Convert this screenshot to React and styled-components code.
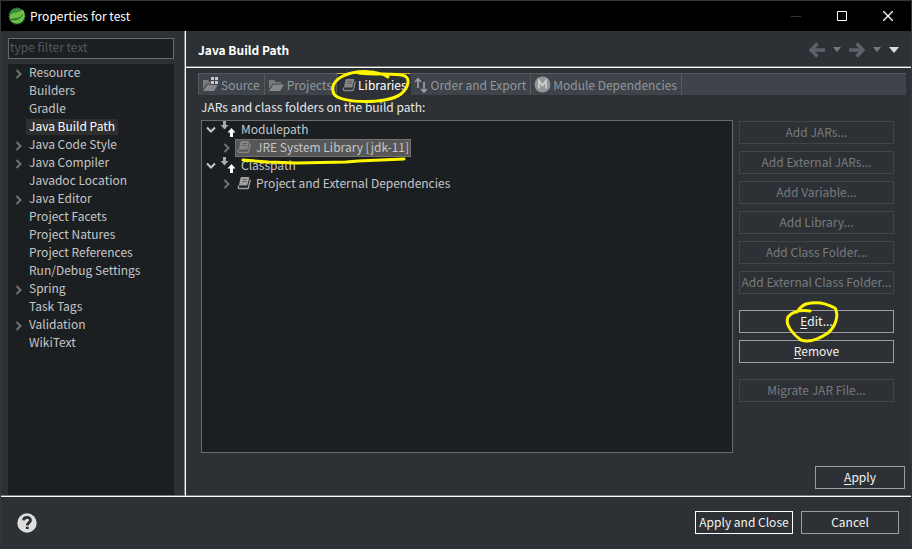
import React from "react";
import styled, { createGlobalStyle, css } from "styled-components";

const GlobalStyle = createGlobalStyle`
  * { box-sizing: border-box; }
  body { margin: 0; background: #2d3135; }
  body, button, input {
    font-family: "Noto Sans CJK KR", "Noto Sans", sans-serif;
    font-size: 12px;
    line-height: 18px;
  }
  ul { list-style: none; margin: 0; padding: 0; }
`;

const Window = styled.div`
  display: flex;
  flex-direction: column;
  min-height: 100vh;
  border: 1px solid #33373a;
  background: #2d3135;
  color: #f2f2f2;
`;

const TitleBar = styled.header`
  display: flex;
  align-items: center;
  height: 30px;
  padding-left: 7px;
  background: #000;
`;

const WindowTitle = styled.h1`
  flex: 1;
  margin: 0 0 0 4px;
  font-size: 12px;
  font-weight: 400;
  color: #fff;
`;

const CaptionButton = styled.button`
  display: flex;
  align-items: center;
  justify-content: center;
  width: 46px;
  height: 30px;
  padding: 0;
  border: 0;
  background: transparent;
  color: ${(p) => (p.disabled ? "#333" : "#fff")};
`;

const Body = styled.div`
  flex: 1;
  display: flex;
  border-bottom: 1px solid #fff;
  box-shadow: inset 0 -1px #77797b;
`;

const Sidebar = styled.aside`
  display: flex;
  flex-direction: column;
  gap: 5px;
  width: 185px;
  padding: 7px 11px 1px 7px;
  border-right: 1px solid #fff;
  box-shadow: inset -1px 0 #77797b;
`;

const FilterInput = styled.input`
  height: 21px;
  padding: 0 1px 4px;
  border: 1px solid #6b6b6b;
  border-radius: 0;
  background: #1c1f21;
  color: #ddd;
  outline: none;
  &::placeholder { color: #55585a; opacity: 1; }
`;

const PageTree = styled.ul`
  flex: 1;
  background: #1c1f21;
`;

const PageItem = styled.li`
  display: flex;
  align-items: center;
  height: 18px;
  padding-left: 7px;
`;

const ChevronSlot = styled.span`
  display: flex;
  align-items: center;
  width: ${(p) => (p.$wide ? "12px" : "11px")};
  padding-top: ${(p) => (p.$wide ? "0" : "2px")};
`;

const PageLink = styled.a`
  height: 16px;
  padding: 0 3px;
  line-height: 14px;
  text-decoration: none;
  white-space: nowrap;
  color: ${(p) => (p.$selected ? "#fff" : "#c4c6c8")};
  background: ${(p) => (p.$selected ? "#2f2f2f" : "transparent")};
`;

const Content = styled.main`
  flex: 1;
  min-width: 0;
  display: flex;
  flex-direction: column;
`;

const PageHeader = styled.div`
  display: flex;
  align-items: center;
  justify-content: space-between;
  height: 37px;
  padding: 1px 12px 0 12px;
  border-bottom: 1px solid #fff;
  box-shadow: inset 0 -1px #77797b;
`;

const PageTitle = styled.h2`
  margin: 0;
  font-size: 12px;
  font-weight: 700;
  color: #fff;
`;

const Navigation = styled.nav`
  display: flex;
  align-items: center;
  gap: 8px;
`;

const NavButton = styled.button`
  display: flex;
  padding: 0;
  border: 0;
  background: transparent;
`;

const TabBar = styled.div`
  display: flex;
  height: 22px;
  margin: 5px 5px 0 12px;
  border: 1px solid #555a5e;
  border-width: 1px 0 0 1px;
  background: #3e444a;
`;

const Tab = styled.button`
  position: relative;
  display: flex;
  align-items: center;
  gap: 2px;
  height: 22px;
  margin-top: -1px;
  padding: 0 4px 0 3px;
  border: solid #555a5e;
  border-width: 1px 1px 0 0;
  background: transparent;
  color: #92989d;
  white-space: nowrap;
  ${(p) => p.$active && css`
    padding: 0 3px 0 5px;
    border-color: #e2ac25 transparent transparent;
    background: #2d3135;
    color: #fff;
  `}
`;

const TreeCaption = styled.div`
  margin: 3px 0 0 15px;
  line-height: 18px;
  color: #e8eaec;
`;

const Workspace = styled.div`
  flex: 1;
  display: flex;
  gap: 6px;
  padding: 4px 17px 13px 15px;
`;

const PathTree = styled.ul`
  flex: 1;
  min-width: 0;
  border: 1px solid #6b6b6b;
  background: #1c1f21;
`;

const PathRow = styled.div`
  display: flex;
  align-items: center;
  height: 18px;
  padding-left: ${(p) => (p.$child ? "21px" : "4px")};
`;

const PathLabel = styled.span`
  position: relative;
  display: flex;
  align-items: center;
  gap: 5px;
  height: 18px;
  padding: 0 1px 3px;
  line-height: 14px;
  white-space: nowrap;
  border: 1px solid ${(p) => (p.$selected ? "#727272" : "transparent")};
  background: ${(p) => (p.$selected ? "#575757" : "transparent")};
  color: #c4c6c8;
`;

const Actions = styled.div`
  display: flex;
  flex-direction: column;
  gap: 16px;
  width: 155px;
  padding-top: 1px;
`;

const ActionGroup = styled.div`
  display: flex;
  flex-direction: column;
  gap: 7px;
`;

const PushButton = styled.button`
  position: relative;
  width: ${(p) => p.$width || "100%"};
  height: 23px;
  padding: 0 0 2px;
  border: 1px solid ${(p) => (p.$primary ? "#fff" : "#9a9c9e")};
  background: transparent;
  color: #f2f2f2;
  line-height: 18px;
  white-space: nowrap;
  &:disabled { border-color: #414548; color: #787b7d; }
  u { text-underline-offset: 2px; }
`;

const ApplyRow = styled.div`
  display: flex;
  justify-content: flex-end;
  padding: 0 6px 7px;
`;

const Footer = styled.footer`
  display: flex;
  align-items: center;
  gap: 8px;
  height: 51px;
  padding: 0 12px 0 16px;
`;

const HelpButton = styled.button`
  display: flex;
  margin-right: auto;
  padding: 0;
  border: 0;
  background: transparent;
`;

const Marker = styled.svg`
  position: absolute;
  z-index: 2;
  overflow: visible;
  pointer-events: none;
  fill: none;
  stroke: #fff700;
  stroke-width: 3;
  stroke-linecap: round;
  stroke-linejoin: round;
`;
const TabMarker = styled(Marker)`left: -6px; top: -4px;`;
const RowMarker = styled(Marker)`left: 6px; top: 19px;`;
const EditMarker = styled(Marker)`left: 45px; top: -11px;`;

const SpringLogo = () => (
  <svg width="18" height="18" viewBox="0 0 18 18" aria-hidden="true">
    <circle cx="9" cy="9" r="7.7" fill="#398c42" stroke="#398c42" strokeWidth="1.4" strokeDasharray="1.5 1" />
    <path d="M2 10C2 4.500 8 8 15 2.800C18 8 16.500 14 12 15.800C7 17.500 3 15 2.200 12.800C6 13.500 11 12.500 14 8.500C10 11.500 6 10.500 2 12Z" fill="#70c043" />
    <path d="M3 12.600C8.500 13.500 12.500 12 14.500 7.500" fill="none" stroke="#246b36" />
  </svg>
);

const Chevron = ({ open }) =>
  open ? (
    <svg width="10" height="8" viewBox="0 0 10 8" fill="none" stroke="#c4c6c8" strokeWidth="2" aria-hidden="true"><path d="M1 1.500L5 5.500L9 1.500" /></svg>
  ) : (
    <svg width="8" height="10" viewBox="0 0 8 10" fill="none" stroke="#6f7274" strokeWidth="2" aria-hidden="true"><path d="M1.500 1L5.500 5L1.500 9" /></svg>
  );

const PathIcon = () => (
  <svg width="16" height="16" viewBox="0 0 16 16" aria-hidden="true">
    <path d="M3 0H6V4H8.500L4.500 8.500L.5 4H3Z" fill="#aaa" />
    <path d="M10 16H13V11.500H15.500L11.500 7L7.500 11.500H10Z" fill="#fff" />
  </svg>
);

const BookIcon = ({ color = "#858585" }) => (
  <svg width="14" height="14" viewBox="0 0 14 14" aria-hidden="true">
    <path d="M4.500 1H11.500Q12.500 1 12.200 2L10.200 9.500H2.500Q1.800 9.500 2.100 8.500L3.500 2Q3.700 1 4.500 1Z" fill={color} />
    <path d="M1.600 9.500Q.6 12.500 2.500 12.500H10.500Q11.300 12.500 11.500 11.500L13.300 3.500" fill="none" stroke={color} strokeWidth="1.300" />
    <path d="M5.500 3.500H10M5 5.500H9.500" stroke="#55585a" strokeWidth=".8" />
  </svg>
);

const FolderIcon = ({ source }) => (
  <svg width="17" height="16" viewBox="0 0 17 16" aria-hidden="true">
    <path d="M1 12V3H6L7.500 5H13V6.500H5L1 12Z" fill="#777b7d" />
    <path d="M5.500 7.500H16L12 14H1Z" fill="#858889" />
    {source && <path d="M8.500 0H17V8H8.500Z" fill="#3e444a" />}
    {source && <path d="M9 0h3v3H9zM13 0h3v3h-3zM9 4h3v3H9zM13 4h3v3h-3z" fill="#c5c7c8" />}
  </svg>
);

const OrderIcon = () => (
  <svg width="15" height="16" viewBox="0 0 15 16" fill="none" stroke="#9a9d9f" strokeWidth="1.700" aria-hidden="true">
    <path d="M4 11V2M1 5L4 1.700L7 5" />
    <path d="M10 5V15M7 12L10 15L13 12" />
  </svg>
);

const ModuleIcon = () => (
  <svg width="17" height="17" viewBox="0 0 17 17" aria-hidden="true">
    <circle cx="8.500" cy="8.500" r="8" fill="#929595" />
    <path d="M5 12.500V4.500L8.500 9.500L12 4.500V12.500" fill="none" stroke="#d2d3d3" strokeWidth="1.600" />
  </svg>
);

const Arrow = ({ forward }) => (
  <svg width="16" height="16" viewBox="0 0 16 16" fill="none" stroke="#5c6068" strokeWidth="3.500" aria-hidden="true">
    <path d={forward ? "M0 8H13M7.500 1.500L14 8L7.500 14.500" : "M16 8H3M8.500 1.500L2 8L8.500 14.500"} />
  </svg>
);

const Caret = ({ large }) =>
  large ? (
    <svg width="10" height="6" viewBox="0 0 10 6" aria-hidden="true"><path d="M0 0H10L5 6Z" fill="#dedede" /></svg>
  ) : (
    <svg width="8" height="5" viewBox="0 0 8 5" aria-hidden="true"><path d="M0 0H8L4 5Z" fill="#77797b" /></svg>
  );

const pages = [
  ["Resource", true], ["Builders"], ["Gradle"], ["Java Build Path"],
  ["Java Code Style", true], ["Java Compiler", true], ["Javadoc Location"],
  ["Java Editor", true], ["Project Facets"], ["Project Natures"],
  ["Project References"], ["Run/Debug Settings"], ["Spring", true],
  ["Task Tags"], ["Validation", true], ["WikiText"],
];

const tabs = [
  { name: "Source", icon: <FolderIcon source /> },
  { name: "Projects", icon: <FolderIcon /> },
  { name: "Libraries", icon: <BookIcon />, active: true },
  { name: "Order and Export", icon: <OrderIcon /> },
  { name: "Module Dependencies", icon: <ModuleIcon /> },
];

const addActions = [
  "Add JARs...", "Add External JARs...", "Add Variable...",
  "Add Library...", "Add Class Folder...", "Add External Class Folder...",
];

function PathNode({ name, child, icon, open, selected, children }) {
  return (
    <PathRow $child={child}>
      <ChevronSlot $wide><Chevron open={open} /></ChevronSlot>
      <PathLabel $selected={selected}>{icon}{name}{children}</PathLabel>
    </PathRow>
  );
}

export default function App() {
  return (
    <>
      <GlobalStyle />
      <Window>
        <TitleBar>
          <SpringLogo />
          <WindowTitle>Properties for test</WindowTitle>
          <CaptionButton disabled aria-label="Minimize">
            <svg width="10" height="1"><path d="M0 .5H10" stroke="currentColor" /></svg>
          </CaptionButton>
          <CaptionButton aria-label="Maximize">
            <svg width="10" height="10"><path d="M.5 .5H9.500V9.500H.5Z" fill="none" stroke="currentColor" /></svg>
          </CaptionButton>
          <CaptionButton aria-label="Close">
            <svg width="10" height="10"><path d="M0 0L10 10M10 0L0 10" stroke="currentColor" strokeWidth="1.300" /></svg>
          </CaptionButton>
        </TitleBar>
        <Body>
          <Sidebar>
            <FilterInput aria-label="Filter pages" placeholder="type filter text" />
            <PageTree>
              {pages.map(([name, expandable]) => (
                <PageItem key={name}>
                  <ChevronSlot>{expandable && <Chevron />}</ChevronSlot>
                  <PageLink href="#" $selected={name === "Java Build Path"}>{name}</PageLink>
                </PageItem>
              ))}
            </PageTree>
          </Sidebar>
          <Content>
            <PageHeader>
              <PageTitle>Java Build Path</PageTitle>
              <Navigation>
                <NavButton aria-label="Back"><Arrow /></NavButton>
                <NavButton aria-label="Back history"><Caret /></NavButton>
                <NavButton aria-label="Forward"><Arrow forward /></NavButton>
                <NavButton aria-label="Forward history"><Caret /></NavButton>
                <NavButton aria-label="View menu"><Caret large /></NavButton>
              </Navigation>
            </PageHeader>
            <TabBar role="tablist">
              {tabs.map((tab) => (
                <Tab key={tab.name} role="tab" aria-selected={!!tab.active} $active={tab.active}>
                  {tab.icon}
                  {tab.name}
                  {tab.active && (
                    <TabMarker width="80" height="34" viewBox="0 0 80 34" aria-hidden="true">
                      <path d="M57 7C47 1 27-1 12 6C2 11 0 18 3 24C9 34 57 34 70 24C78 17 79 9 74 6C66 3 45 5 28 3" />
                    </TabMarker>
                  )}
                </Tab>
              ))}
            </TabBar>
            <TreeCaption>JARs and class folders on the build path:</TreeCaption>
            <Workspace>
              <PathTree>
                <li>
                  <PathNode name="Modulepath" icon={<PathIcon />} open />
                  <PathNode name="JRE System Library [jdk-11]" icon={<BookIcon />} child selected>
                    <RowMarker width="164" height="8" viewBox="0 0 164 8" aria-hidden="true">
                      <path d="M1 1L26 3L55 4L104 3L116 2L162 0" />
                    </RowMarker>
                  </PathNode>
                </li>
                <li>
                  <PathNode name="Classpath" icon={<PathIcon />} open />
                  <PathNode name="Project and External Dependencies" icon={<BookIcon color="#a0a0a0" />} child />
                </li>
              </PathTree>
              <Actions>
                <ActionGroup>
                  {addActions.map((name) => <PushButton key={name} disabled>{name}</PushButton>)}
                </ActionGroup>
                <ActionGroup>
                  <PushButton>
                    <u>E</u>dit...
                    <EditMarker width="54" height="42" viewBox="0 0 54 42" aria-hidden="true">
                      <path d="M25 11C17 10 8 11 3 17C-1 25 10 36 16 40C25 43 34 39 43 33C51 26 54 15 50 8C43 4 32 1 21 4C16 6 14 9 12 12" />
                    </EditMarker>
                  </PushButton>
                  <PushButton><u>R</u>emove</PushButton>
                </ActionGroup>
                <PushButton disabled>Migrate JAR File...</PushButton>
              </Actions>
            </Workspace>
            <ApplyRow><PushButton $width="90px"><u>A</u>pply</PushButton></ApplyRow>
          </Content>
        </Body>
        <Footer>
          <HelpButton aria-label="Help">
            <svg width="20" height="20" viewBox="0 0 20 20" aria-hidden="true">
              <circle cx="10" cy="10" r="9.700" fill="#dedede" />
              <path d="M6.500 7.300C6.800 3.600 13.500 3.500 13.500 7.200C13.500 9.800 10.300 9.500 10.300 12.500M10.300 13.700V16" fill="none" stroke="#2d3135" strokeWidth="2.800" />
            </svg>
          </HelpButton>
          <PushButton $primary $width="98px">Apply and Close</PushButton>
          <PushButton $width="98px">Cancel</PushButton>
        </Footer>
      </Window>
    </>
  );
}
